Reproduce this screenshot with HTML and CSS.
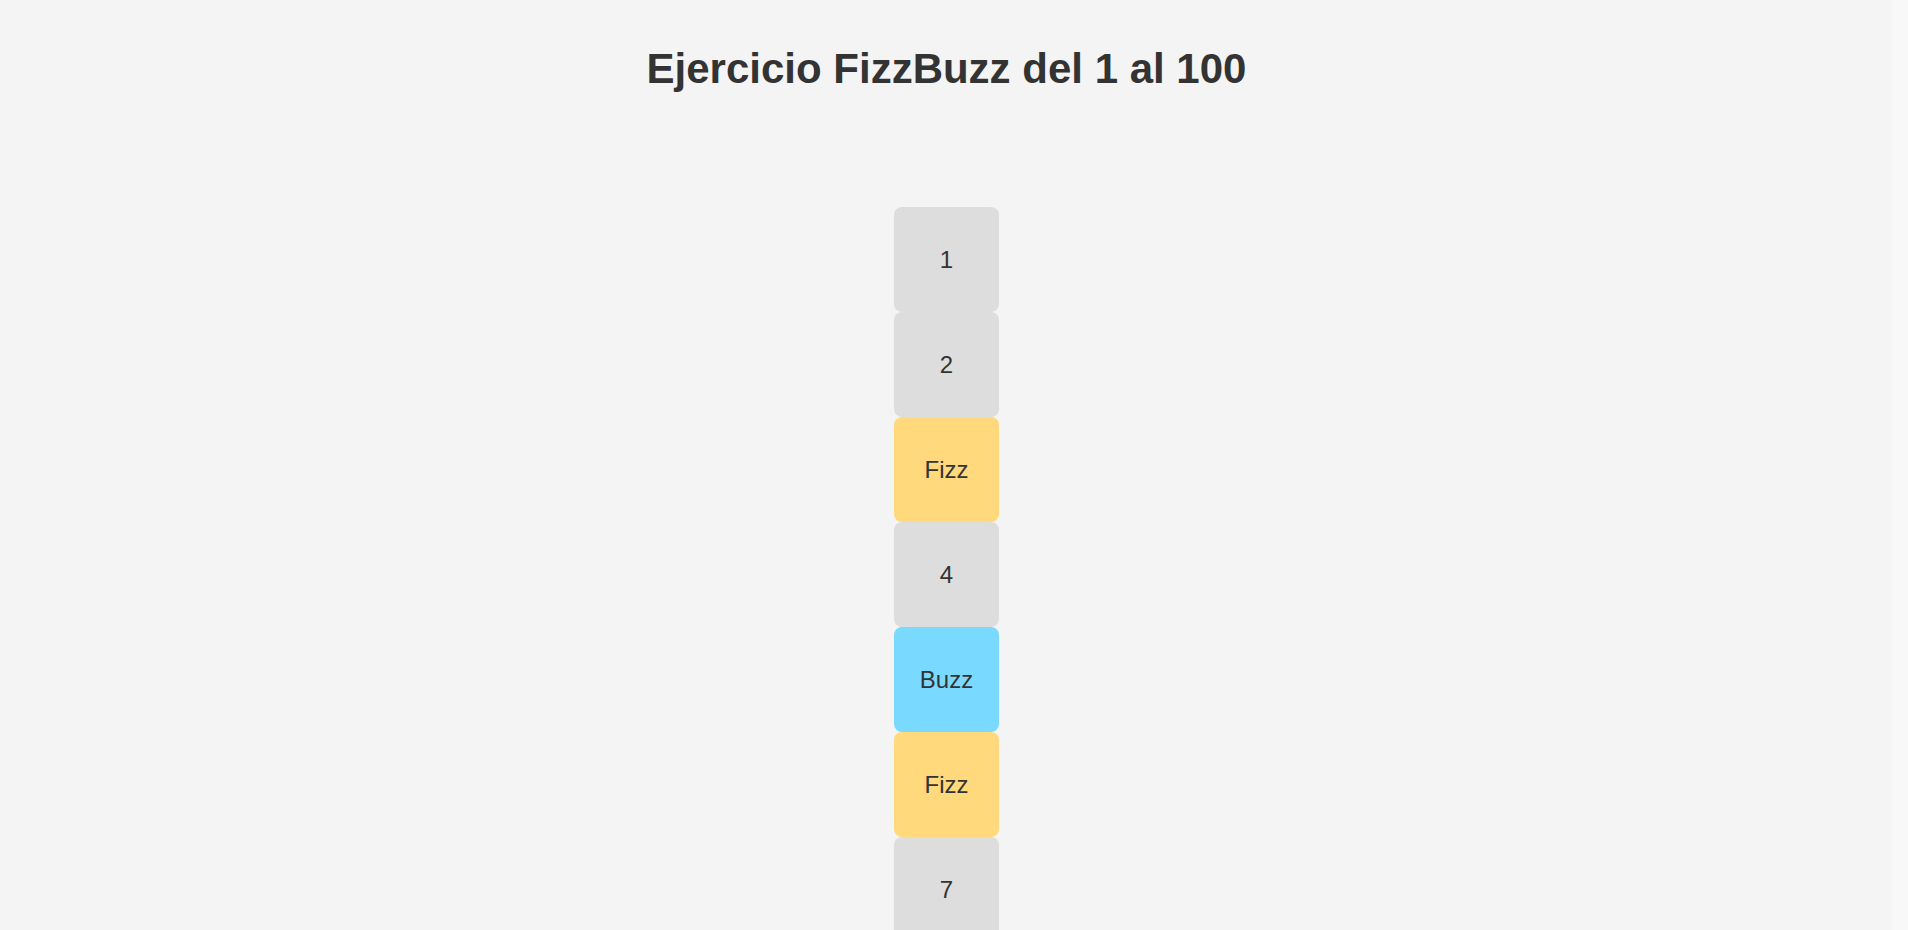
FILE: index.html
```html
<!DOCTYPE html>
<html lang="es">
<head>
<meta charset="utf-8">
<title>FizzBuzz</title>
<link rel="stylesheet" href="styles.css">
</head>
<body>
<h1 class="title">Ejercicio FizzBuzz del 1 al 100</h1>
<div class="list">
<div class="box">1</div>
<div class="box">2</div>
<div class="box fizz">Fizz</div>
<div class="box">4</div>
<div class="box buzz">Buzz</div>
<div class="box fizz">Fizz</div>
<div class="box">7</div>
<div class="box">8</div>
<div class="box fizz">Fizz</div>
<div class="box buzz">Buzz</div>
<div class="box">11</div>
<div class="box fizz">Fizz</div>
<div class="box">13</div>
<div class="box">14</div>
<div class="box fizzbuzz">FizzBuzz</div>
<div class="box">16</div>
<div class="box">17</div>
<div class="box fizz">Fizz</div>
<div class="box">19</div>
<div class="box buzz">Buzz</div>
<div class="box fizz">Fizz</div>
<div class="box">22</div>
<div class="box">23</div>
<div class="box fizz">Fizz</div>
<div class="box buzz">Buzz</div>
<div class="box">26</div>
<div class="box fizz">Fizz</div>
<div class="box">28</div>
<div class="box">29</div>
<div class="box fizzbuzz">FizzBuzz</div>
<div class="box">31</div>
<div class="box">32</div>
<div class="box fizz">Fizz</div>
<div class="box">34</div>
<div class="box buzz">Buzz</div>
<div class="box fizz">Fizz</div>
<div class="box">37</div>
<div class="box">38</div>
<div class="box fizz">Fizz</div>
<div class="box buzz">Buzz</div>
<div class="box">41</div>
<div class="box fizz">Fizz</div>
<div class="box">43</div>
<div class="box">44</div>
<div class="box fizzbuzz">FizzBuzz</div>
<div class="box">46</div>
<div class="box">47</div>
<div class="box fizz">Fizz</div>
<div class="box">49</div>
<div class="box buzz">Buzz</div>
<div class="box fizz">Fizz</div>
<div class="box">52</div>
<div class="box">53</div>
<div class="box fizz">Fizz</div>
<div class="box buzz">Buzz</div>
<div class="box">56</div>
<div class="box fizz">Fizz</div>
<div class="box">58</div>
<div class="box">59</div>
<div class="box fizzbuzz">FizzBuzz</div>
<div class="box">61</div>
<div class="box">62</div>
<div class="box fizz">Fizz</div>
<div class="box">64</div>
<div class="box buzz">Buzz</div>
<div class="box fizz">Fizz</div>
<div class="box">67</div>
<div class="box">68</div>
<div class="box fizz">Fizz</div>
<div class="box buzz">Buzz</div>
<div class="box">71</div>
<div class="box fizz">Fizz</div>
<div class="box">73</div>
<div class="box">74</div>
<div class="box fizzbuzz">FizzBuzz</div>
<div class="box">76</div>
<div class="box">77</div>
<div class="box fizz">Fizz</div>
<div class="box">79</div>
<div class="box buzz">Buzz</div>
<div class="box fizz">Fizz</div>
<div class="box">82</div>
<div class="box">83</div>
<div class="box fizz">Fizz</div>
<div class="box buzz">Buzz</div>
<div class="box">86</div>
<div class="box fizz">Fizz</div>
<div class="box">88</div>
<div class="box">89</div>
<div class="box fizzbuzz">FizzBuzz</div>
<div class="box">91</div>
<div class="box">92</div>
<div class="box fizz">Fizz</div>
<div class="box">94</div>
<div class="box buzz">Buzz</div>
<div class="box fizz">Fizz</div>
<div class="box">97</div>
<div class="box">98</div>
<div class="box fizz">Fizz</div>
<div class="box buzz">Buzz</div>
</div>
</body>
</html>
```
FILE: styles.css
```css
html, body {
  margin: 0;
  padding: 0;
}

html {
  background: #f4f4f4 linear-gradient(to left, #f8f8f8 15px, #f4f4f4 15px) fixed no-repeat;
}

body {
  color: #333333;
  font-family: "Liberation Sans", Arial, sans-serif;
  padding: 45px 15px 200px 0;
}

.title {
  margin: 0;
  font-size: 42px;
  line-height: 48px;
  font-weight: bold;
  text-align: center;
  color: #333333;
}

.list {
  margin-top: 114px;
  display: flex;
  flex-direction: column;
  align-items: center;
}

.box {
  width: 105px;
  height: 105px;
  border-radius: 8px;
  background: #dddddd;
  display: flex;
  align-items: center;
  justify-content: center;
  font-size: 24px;
  color: #333333;
}

.fizz {
  background: #ffd97b;
}

.buzz {
  background: #7ad9ff;
}

.fizzbuzz {
  background: #ff9e9e;
}
```
